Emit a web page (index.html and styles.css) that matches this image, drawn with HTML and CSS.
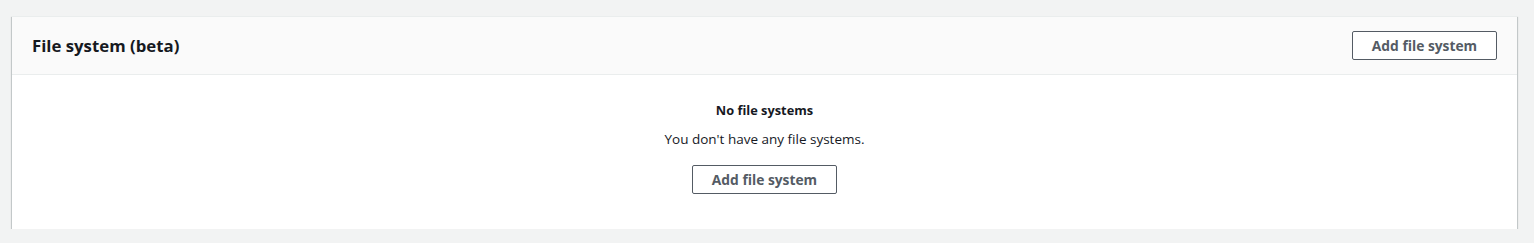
FILE: index.html
```html
<!DOCTYPE html>
<html>
<head>
<meta charset="utf-8">
<link rel="stylesheet" href="styles.css">
</head>
<body>
<div class="page">
  <section class="card">
    <header class="card-header">
      <h2 class="card-title">File system (beta)</h2>
      <button class="btn">Add file system</button>
    </header>
    <div class="card-body">
      <div class="empty-title">No file systems</div>
      <div class="empty-text">You don't have any file systems.</div>
      <button class="btn">Add file system</button>
    </div>
  </section>
</div>
</body>
</html>
```
FILE: styles.css
```css
html, body {
  margin: 0;
  padding: 0;
  background: #f2f3f3;
  font-family: "Open Sans", "Noto Sans", sans-serif;
  color: #16191f;
}
.page {
  padding: 16px 17px 0 12px;
}
.card {
  background: #ffffff;
  box-shadow: 0 1px 1px 0 rgba(0, 28, 36, 0.3), 1px 1px 1px 0 rgba(0, 28, 36, 0.15), -1px 1px 1px 0 rgba(0, 28, 36, 0.15);
  border-top: 1px solid #eaeded;
}
.card-header {
  display: flex;
  align-items: center;
  justify-content: space-between;
  height: 57px;
  padding: 0 20px;
  background: #fafafa;
  border-bottom: 1px solid #eaeded;
}
.card-title {
  margin: 0;
  font-size: 16.8px;
  font-weight: 700;
  line-height: 22px;
  color: #16191f;
}
.btn {
  font-family: "Open Sans", "Noto Sans", sans-serif;
  font-size: 13.8px;
  font-weight: 700;
  color: #545b64;
  background: #ffffff;
  border: 1px solid #545b64;
  border-radius: 2px;
  width: 145px;
  height: 29px;
  padding: 0;
  line-height: 27px;
}
.card-body {
  display: flex;
  flex-direction: column;
  align-items: center;
  padding: 25px 0 35px;
}
.empty-title {
  font-size: 12.8px;
  font-weight: 700;
  line-height: 20px;
}
.empty-text {
  font-size: 13.5px;
  line-height: 20px;
  margin-top: 9px;
}
.card-body .btn {
  margin-top: 16px;
}
```
